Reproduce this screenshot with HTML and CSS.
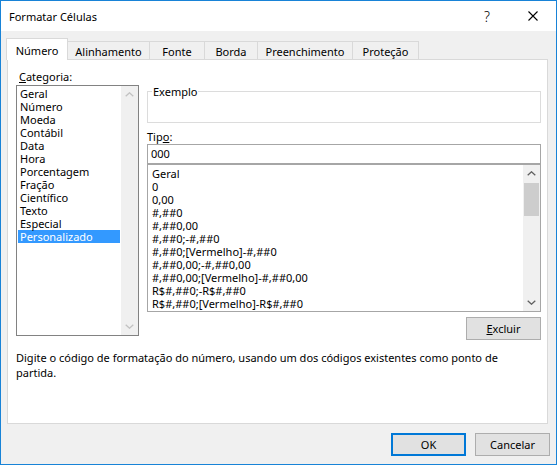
FILE: index.html
```html
<!DOCTYPE html>
<html lang="pt-BR">
<head>
<meta charset="utf-8">
<title>Formatar Células</title>
<link rel="stylesheet" href="styles.css">
</head>
<body>
<div class="dialog">
  <div class="titlebar">
    <span class="title">Formatar Células</span>
    <span class="caption-btn help">?</span>
    <span class="caption-btn close">
      <svg width="10" height="10" viewBox="0 0 10 10"><path d="M0.5 0.5 L9.5 9.5 M9.5 0.5 L0.5 9.5" stroke="#000" stroke-width="1.1" fill="none"/></svg>
    </span>
  </div>

  <div class="tabs">
    <div class="tab tab-active tab-numero">Número</div>
    <div class="tab tab-alinhamento">Alinhamento</div>
    <div class="tab tab-fonte">Fonte</div>
    <div class="tab tab-borda">Borda</div>
    <div class="tab tab-preenchimento">Preenchimento</div>
    <div class="tab tab-protecao">Proteção</div>
  </div>

  <div class="panel">
    <div class="row">
      <div class="left">
        <div class="field-label cat-label"><u>C</u>ategoria:</div>
        <div class="listbox cat-list">
          <ul class="items cat-items">
            <li>Geral</li>
            <li>Número</li>
            <li>Moeda</li>
            <li>Contábil</li>
            <li>Data</li>
            <li>Hora</li>
            <li>Porcentagem</li>
            <li>Fração</li>
            <li>Científico</li>
            <li>Texto</li>
            <li>Especial</li>
            <li class="selected">Personalizado</li>
          </ul>
          <div class="scrollbar">
            <div class="sb-btn"><svg width="9" height="5" viewBox="0 0 9 5"><polyline points="0.7,4.3 4.5,0.8 8.3,4.3" class="chev chev-off"/></svg></div>
            <div class="sb-track"></div>
            <div class="sb-btn"><svg width="9" height="5" viewBox="0 0 9 5"><polyline points="0.7,0.7 4.5,4.2 8.3,0.7" class="chev chev-off"/></svg></div>
          </div>
        </div>
      </div>

      <div class="right">
        <div class="group">
          <div class="group-label">Exemplo</div>
        </div>
        <div class="field-label tipo-label">Tip<u>o</u>:</div>
        <div class="textbox">000</div>
        <div class="listbox fmt-list">
          <ul class="items fmt-items">
            <li>Geral</li>
            <li>0</li>
            <li>0,00</li>
            <li>#,##0</li>
            <li>#,##0,00</li>
            <li>#,##0;-#,##0</li>
            <li>#,##0;[Vermelho]-#,##0</li>
            <li>#,##0,00;-#,##0,00</li>
            <li>#,##0,00;[Vermelho]-#,##0,00</li>
            <li>R$#,##0;-R$#,##0</li>
            <li>R$#,##0;[Vermelho]-R$#,##0</li>
          </ul>
          <div class="scrollbar">
            <div class="sb-btn"><svg width="9" height="5" viewBox="0 0 9 5"><polyline points="0.7,4.3 4.5,0.8 8.3,4.3" class="chev"/></svg></div>
            <div class="sb-track"><div class="sb-thumb"></div></div>
            <div class="sb-btn"><svg width="9" height="5" viewBox="0 0 9 5"><polyline points="0.7,0.7 4.5,4.2 8.3,0.7" class="chev"/></svg></div>
          </div>
        </div>
        <button class="btn btn-excluir" type="button"><u>E</u>xcluir</button>
      </div>
    </div>

    <p class="hint">Digite o código de formatação do número, usando um dos códigos existentes como ponto de<br>partida.</p>
  </div>

  <div class="footer">
    <button class="btn btn-default" type="button">OK</button>
    <button class="btn" type="button">Cancelar</button>
  </div>
</div>
</body>
</html>
```
FILE: styles.css
```css
* {
  box-sizing: border-box;
}

html, body {
  margin: 0;
  padding: 0;
}

body {
  font-family: "Noto Sans", "Open Sans", sans-serif;
  font-size: 11px;
  color: #000;
  background: #fff;
}

/* Window frame */
.dialog {
  width: 557px;
  height: 465px;
  border: 1px solid #1883d7;
  background: #f0f0f0;
  display: flex;
  flex-direction: column;
}

.titlebar {
  flex-shrink: 0;
  height: 30px;
  background: #fff;
  display: flex;
  align-items: center;
  padding-left: 8px;
}

.title {
  flex: 1;
  font-size: 11px;
  padding-top: 1px;
}

.caption-btn {
  width: 46px;
  height: 30px;
  display: flex;
  align-items: center;
  justify-content: center;
}

.help {
  font-size: 14px;
  font-weight: 300;
  padding-top: 1px;
}

.close svg {
  display: block;
}

/* Tab strip */
.tabs {
  flex-shrink: 0;
  height: 28px;
  display: flex;
  align-items: flex-end;
  padding-left: 5px;
}

.tab {
  height: 18px;
  border-top: 1px solid #d9d9d9;
  border-right: 1px solid #d9d9d9;
  display: flex;
  align-items: center;
  justify-content: center;
  padding-top: 1px;
}

.tab-active {
  height: 22px;
  margin-bottom: -1px;
  background: #fff;
  border-left: 1px solid #d9d9d9;
  position: relative;
  z-index: 1;
  padding-top: 2px;
}

.tab-numero { width: 62px; }
.tab-alinhamento { width: 82px; }
.tab-fonte { width: 55px; }
.tab-borda { width: 53px; }
.tab-preenchimento { width: 95px; }
.tab-protecao { width: 66px; }

/* Tab page */
.panel {
  flex-shrink: 0;
  width: 541px;
  height: 365px;
  margin-left: 6px;
  border: 1px solid #d9d9d9;
  background: #fff;
  padding: 9px 0 0 8px;
}

.row {
  display: flex;
  align-items: flex-start;
}

.left {
  width: 123px;
}

.field-label {
  height: 15px;
  line-height: 15px;
  white-space: nowrap;
}

.cat-label {
  padding-left: 3px;
  margin-bottom: 1px;
}

.listbox {
  display: flex;
  background: #fff;
}

.cat-list {
  height: 251px;
  border: 1px solid #828282;
}

.items {
  list-style: none;
  margin: 0;
  flex: 1;
  min-width: 0;
  white-space: nowrap;
}

.items li {
  height: 13px;
  line-height: 13px;
}

.cat-items {
  padding: 1px 0 0 1px;
}

.cat-items li {
  padding-left: 2px;
  margin-right: 1px;
}

.cat-items li.selected {
  background: #3399ff;
  color: #fff;
}

/* Scrollbars */
.scrollbar {
  width: 17px;
  flex-shrink: 0;
  background: #f0f0f0;
  display: flex;
  flex-direction: column;
}

.sb-btn {
  height: 17px;
  display: flex;
  align-items: center;
  justify-content: center;
}

.sb-btn svg {
  display: block;
}

.sb-track {
  flex: 1;
}

.sb-thumb {
  width: 15px;
  height: 33px;
  margin: 1px 0 0 1px;
  background: #cdcdcd;
}

.chev {
  fill: none;
  stroke: #606060;
  stroke-width: 1.3;
}

.chev-off {
  stroke: #c2c2c2;
}

/* Right column */
.right {
  width: 394px;
  margin-left: 8px;
  padding-top: 22px;
  display: flex;
  flex-direction: column;
}

.group {
  height: 32px;
  border: 1px solid #dcdcdc;
}

.group-label {
  width: fit-content;
  margin: -8px 0 0 4px;
  padding: 0 1px;
  line-height: 15px;
  background: #fff;
}

.tipo-label {
  margin-top: 6px;
}

.textbox {
  height: 20px;
  border: 1px solid #a6a6a6;
  padding-left: 3px;
  line-height: 18px;
}

.fmt-list {
  height: 148px;
  border: 1px solid #a6a6a6;
}

.fmt-items {
  padding: 2px 0 0 4px;
}

/* Buttons */
.btn {
  width: 75px;
  height: 23px;
  margin: 0;
  padding: 0;
  border: 1px solid #adadad;
  background: #e1e1e1;
  font: inherit;
  color: #000;
  line-height: 19px;
}

.btn-excluir {
  margin-top: 5px;
  align-self: flex-end;
}

.btn-default {
  border: 2px solid #0078d7;
}

.hint {
  margin: 10px 0 0;
  line-height: 15px;
}

.footer {
  margin-top: 9px;
  display: flex;
  justify-content: flex-end;
  gap: 9px;
  padding-right: 6px;
}
```
